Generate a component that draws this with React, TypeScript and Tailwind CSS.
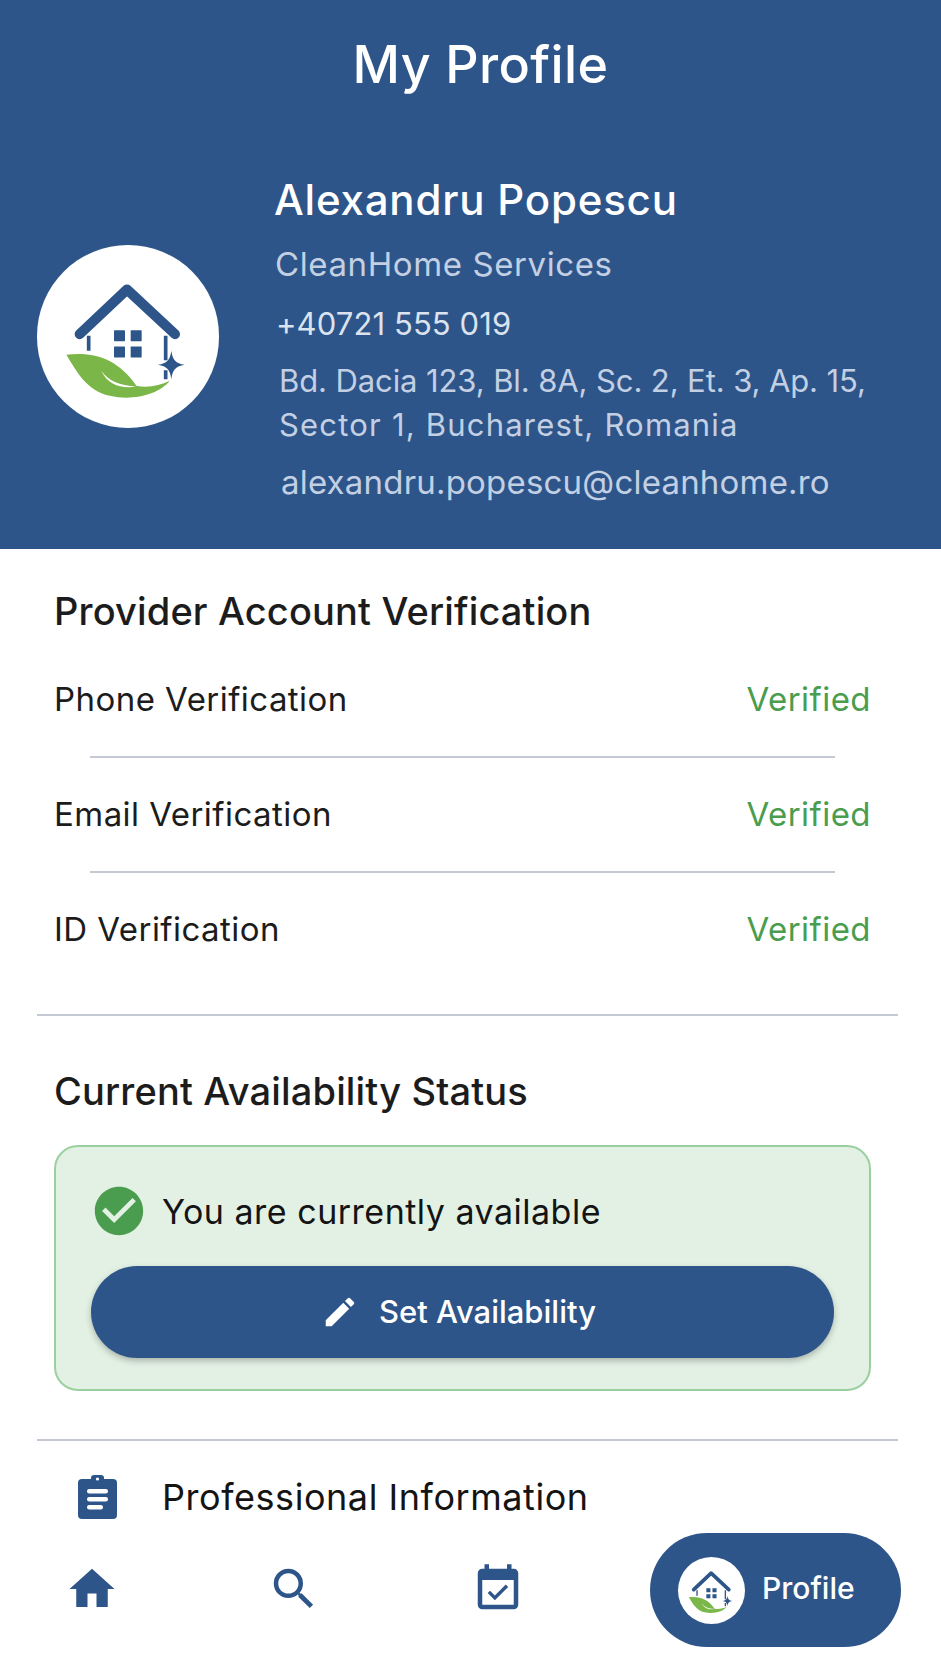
import React from 'react';
import { MdHome, MdSearch, MdEventAvailable, MdEdit, MdCheckCircle } from 'react-icons/md';

const Logo = ({ className = '' }: { className?: string }) => (
  <svg viewBox="52 44 546 546" className={className}>
    <path d="M180 310 L322 176 L466 310" fill="none" stroke="#2e5589" strokeWidth="30" strokeLinecap="round" strokeLinejoin="round" />
    <path d="M207 315 V360 M438 315 V388 M438 418 V445" fill="none" stroke="#2e5589" strokeWidth="11" />
    <rect x="283" y="298" width="33" height="33" rx="2" fill="#2e5589" />
    <rect x="333" y="298" width="33" height="33" rx="2" fill="#2e5589" />
    <rect x="283" y="347" width="33" height="33" rx="2" fill="#2e5589" />
    <rect x="333" y="347" width="33" height="33" rx="2" fill="#2e5589" />
    <path d="M455 360 C459 388 468 398 495 402 C468 407 459 416 455 445 C451 416 442 407 415 402 C442 398 451 388 455 360 Z" fill="#2e5589" />
    <path d="M140 372 C225 362 295 385 350 465 C385 472 420 465 450 450 C420 490 340 512 270 495 C200 480 170 420 140 372 Z" fill="#7ab648" />
    <path d="M245 420 C265 450 300 465 350 467 C310 474 265 465 245 420 Z" fill="#ffffff" />
  </svg>
);

// clipboard with rounded lines, the material one has square ones
const ClipboardIcon = () => (
  <svg viewBox="0 0 39 44" className="h-[44px] w-[39px] shrink-0">
    <rect x="0" y="4" width="39" height="40" rx="4" fill="#2e5589" />
    <rect x="13" y="0" width="13" height="8" rx="3" fill="#2e5589" />
    <circle cx="19.5" cy="4" r="1.6" fill="#ffffff" />
    <rect x="9" y="14" width="21" height="4.5" rx="2.2" fill="#ffffff" />
    <rect x="9" y="22" width="21" height="4.5" rx="2.2" fill="#ffffff" />
    <rect x="9" y="30" width="16" height="4.5" rx="2.2" fill="#ffffff" />
  </svg>
);

const rows = ['Phone Verification', 'Email Verification', 'ID Verification'];

export default function App() {
  return (
    <div className="flex h-[1672px] w-[941px] flex-col overflow-hidden bg-white font-['Inter',sans-serif]">
      <div className="flex-1 overflow-hidden">
        {/* Header */}
        <header className="h-[549px] bg-[#2e5589] pt-[35px] text-white">
          <h1 className="pl-[20px] text-center text-[52px] leading-[60px] font-medium tracking-[0.4px]">My Profile</h1>
          <div className="mt-[81px] flex items-center pl-[37px]">
            <div className="mb-[6px] h-[183px] w-[182px] shrink-0 rounded-full bg-white">
              <Logo className="h-full w-full" />
            </div>
            <div className="ml-[55px]">
              <p className="text-[42px] leading-[48px] font-medium tracking-[0.8px]">Alexandru Popescu</p>
              <p className="mt-[20px] pl-[1px] text-[33px] leading-[40px] tracking-[0.6px] text-[#c3d0e4]">CleanHome Services</p>
              <p className="mt-[20px] pl-[2px] text-[31px] leading-[40px] tracking-[0.1px] text-[#dbe3ef]">+40721 555 019</p>
              <p className="mt-[15px] pl-[5px] text-[31px] leading-[44px] text-[#c3d0e4]">
                <span className="tracking-[-0.1px]">Bd. Dacia 123, Bl. 8A, Sc. 2, Et. 3, Ap. 15,</span>
                <br />
                <span className="tracking-[1.2px]">Sector 1, Bucharest, Romania</span>
              </p>
              <p className="mt-[15px] pl-[7px] text-[33px] leading-[40px] tracking-[0.2px] text-[#c3d0e4]">alexandru.popescu@cleanhome.ro</p>
            </div>
          </div>
        </header>

        {/* Verification */}
        <section className="pt-[40px]">
          <h2 className="pl-[54px] text-[38px] leading-[44px] font-medium tracking-[0.15px] text-[#1c1c1c]">Provider Account Verification</h2>
          <div className="mt-[10px] pr-[70px] pl-[54px]">
            {rows.map((label, i) => (
              <div key={label}>
                <div className="flex h-[113px] items-center justify-between text-[33px] tracking-[0.45px]">
                  <span className="text-[#1c1c1c]">{label}</span>
                  <span className="text-[#4a9d4e]">Verified</span>
                </div>
                {i < rows.length - 1 && <div className="mx-[36px] h-[2px] bg-[#c5c9d3]" />}
              </div>
            ))}
          </div>
          <div className="mt-[28px] mr-[43px] ml-[37px] h-[2px] bg-[#c5c9d3]" />
        </section>

        {/* Availability */}
        <section className="px-[54px] pt-[53px]">
          <h2 className="text-[38px] leading-[44px] font-medium tracking-[0.15px] text-[#1c1c1c]">Current Availability Status</h2>
          <div className="mt-[32px] mr-[16px] flex h-[246px] flex-col rounded-[24px] border-2 border-[#9bcf9e] bg-[#e3f1e4] px-[35px] pt-[36px]">
            <div className="flex h-[56px] items-center text-[34px] tracking-[0.5px] text-[#141414]">
              <MdCheckCircle className="ml-[-1px] shrink-0 text-[#4a9d4e]" size={58} />
              <span className="ml-[14px]">You are currently available</span>
            </div>
            <button className="mt-[27px] flex h-[92px] items-center justify-center rounded-full bg-[#2e5589] pr-[8px] text-[31px] font-medium text-white shadow-[0_3px_6px_rgba(0,0,0,0.25)]">
              <MdEdit size={38} />
              <span className="ml-[20px]">Set Availability</span>
            </button>
          </div>
        </section>

        <div className="mt-[48px] mr-[43px] ml-[37px] h-[2px] bg-[#c5c9d3]" />

        {/* Professional information */}
        <div className="flex h-[116px] items-center pb-[4px] pl-[78px] text-[36px] tracking-[0.55px] text-[#141414]">
          <ClipboardIcon />
          <span className="ml-[45px]">Professional Information</span>
        </div>
      </div>

      {/* Bottom nav */}
      <nav className="relative flex h-[139px] shrink-0 items-start bg-white pl-[65px] text-[#2e5589]">
        <MdHome className="mt-[29px]" size={54} />
        <MdSearch className="mt-[29px] ml-[148px]" size={54} />
        <MdEventAvailable className="mt-[29px] ml-[150px]" size={54} />
        <div className="ml-[125px] flex h-[114px] w-[251px] items-center rounded-full bg-[#2e5589] pl-[28px] text-white">
          <div className="h-[67px] w-[67px] shrink-0 rounded-full bg-white">
            <Logo className="h-full w-full" />
          </div>
          <span className="ml-[17px] pb-[4px] text-[30px] font-medium">Profile</span>
        </div>
      </nav>
    </div>
  );
}
